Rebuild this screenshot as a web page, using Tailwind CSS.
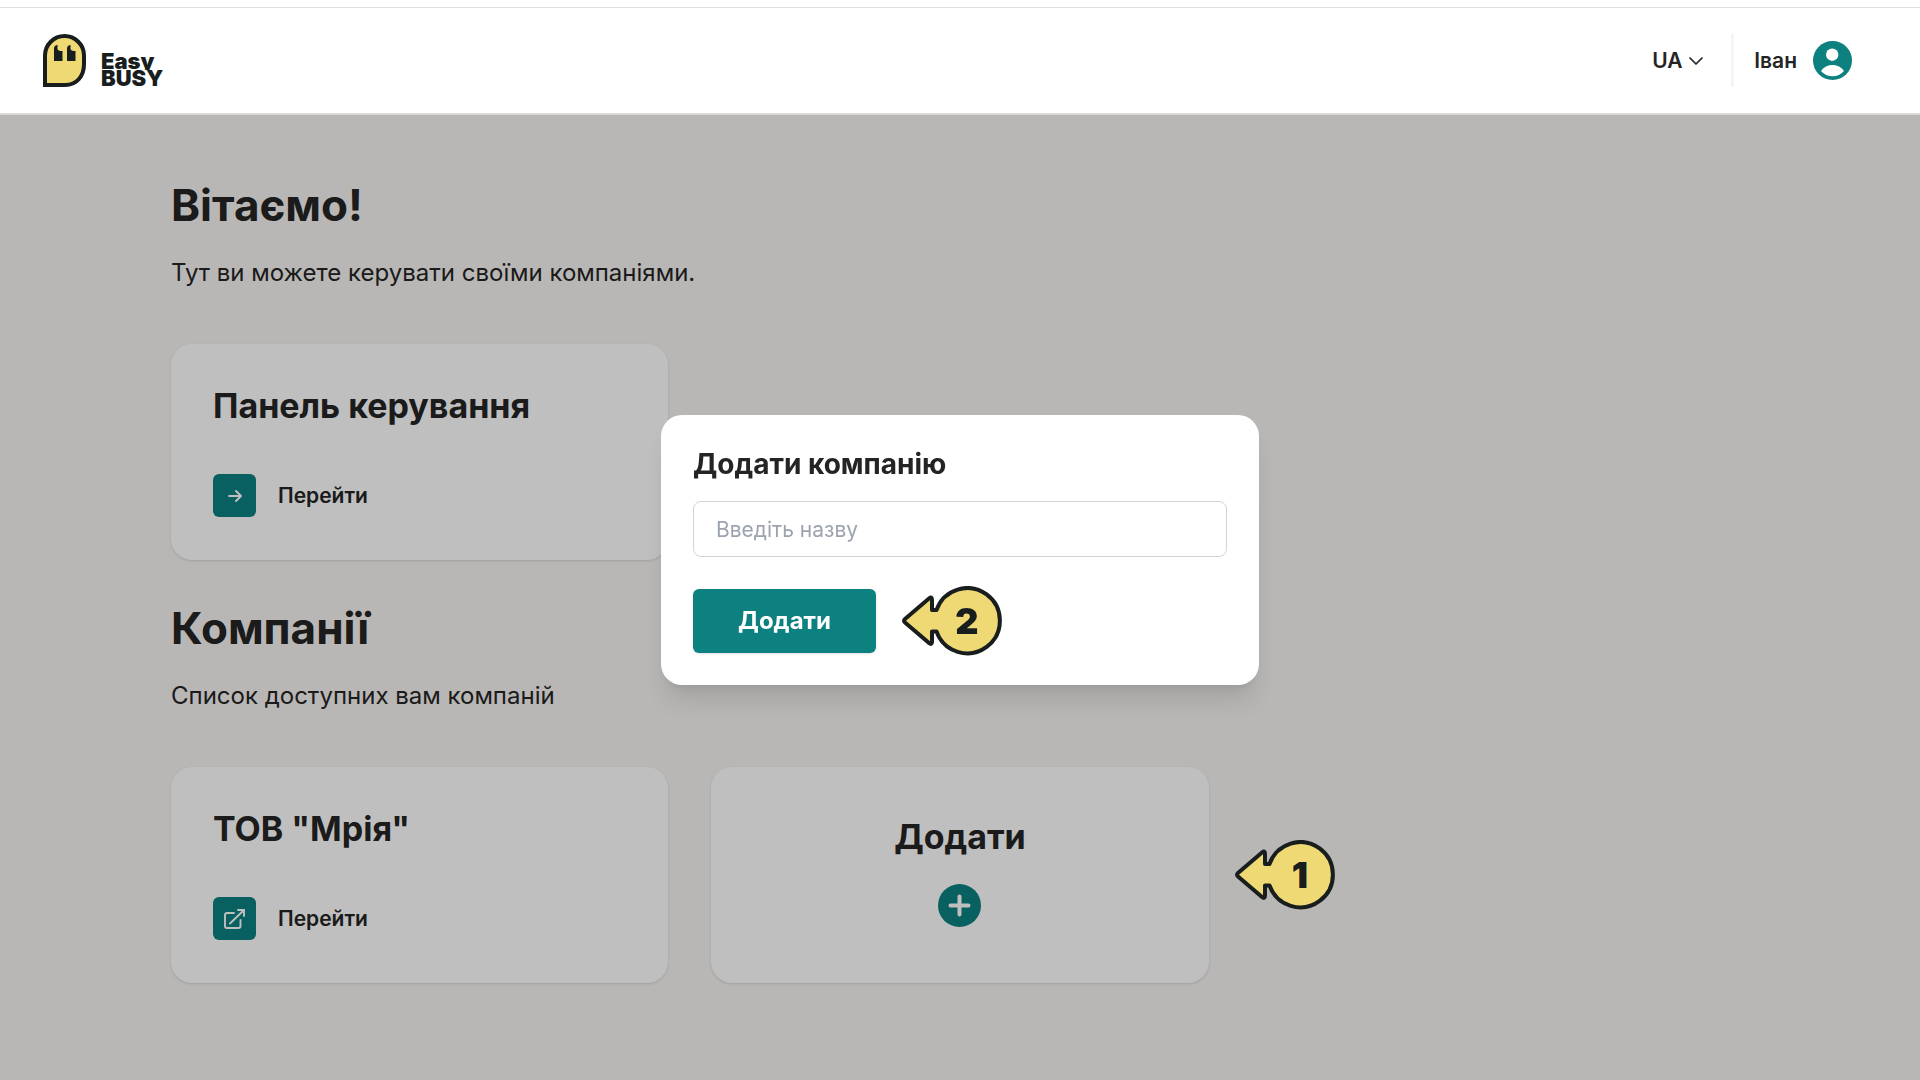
<!DOCTYPE html>
<html lang="uk">
<head>
    <meta charset="UTF-8">
    <meta name="viewport" content="width=device-width, initial-scale=1.0">
    <title>Компанії | Easy Busy</title>
    <script src="https://cdn.jsdelivr.net/npm/@tailwindcss/browser@4"></script>
</head>
<body class="min-h-screen flex flex-col bg-white font-['Inter',sans-serif] text-[#242424]">
    <header class="mt-[7px] border-t border-t-[#e0e0e0] border-b-2 border-b-[#d9d9d9] bg-white">
        <div class="h-[105px] pl-[43px] pr-[68px] flex justify-between items-center">
            <a href="#" class="flex items-end gap-[15px] text-[#181d1d]" aria-label="Easy Busy">
                <svg class="w-[43px] h-[53px]" viewBox="0 0 43 53" fill="none">
                    <path d="M2 51V21.5a19.5 19.5 0 0 1 39 0V30C41 42 34 51 22 51Z" fill="#efd974" stroke="#181d1d" stroke-width="4"/>
                    <path d="M11 27V14.5C11 12.5 12.5 11 14.5 11V15C15 16.5 16 17 19.5 17V27Z" fill="#181d1d"/>
                    <path d="M24 27V14.5C24 12.5 25.5 11 27.5 11V15C28 16.5 29 17 32.5 17V27Z" fill="#181d1d"/>
                </svg>
                <span class="flex flex-col text-[22px] leading-[17px] font-black"><span class="overflow-hidden">Easy</span><span>BUSY</span></span>
            </a>

            <div class="flex items-center text-[21px] leading-7 font-semibold">
                <div class="flex items-center gap-[6px]">
                    <select aria-label="Мова" class="appearance-none bg-transparent">
                        <option>UA</option>
                    </select>
                    <svg class="w-[14px] h-2 pointer-events-none" viewBox="0 0 14 8" fill="none" stroke="#242424" stroke-width="1.7" stroke-linecap="round" stroke-linejoin="round"><path d="M1 1l6 6 6-6"/></svg>
                </div>
                <div class="ml-7 mr-5 w-[3px] h-[53px] bg-[#f7f4f2]"></div>
                <button type="button" class="flex items-center gap-4">
                    <span>Іван</span>
                    <svg class="size-[39px]" viewBox="0 0 39 39">
                        <circle cx="19.5" cy="19.5" r="19.5" fill="#0d8080"/>
                        <circle cx="19.2" cy="13.7" r="6.2" fill="#fff"/>
                        <path d="M8 30C11 25.8 15 24 19.5 24S28 25.8 31 30C28 33.5 24 35.2 19.5 35.2S11 33.5 8 30Z" fill="#fff"/>
                    </svg>
                </button>
            </div>
        </div>
    </header>

    <main class="relative flex-1 bg-[#f7f4f2] px-[171px] pt-[66px] pb-24">
        <!-- overlay -->
        <div class="absolute inset-0 z-10 bg-black/25"></div>

        <section>
            <h1 class="text-[44px] leading-12 font-bold">Вітаємо!</h1>
            <p class="mt-[27px] text-[24px] leading-[34px]">Тут ви можете керувати своїми компаніями.</p>
            <div class="mt-[54px] grid grid-cols-3 gap-[43px]">
                <div class="rounded-[21px] bg-white px-[42px] py-[43px] shadow-sm">
                    <h2 class="text-[34px] leading-[38px] font-bold">Панель керування</h2>
                    <a href="#" class="mt-[49px] flex items-center gap-[22px] text-[21px] leading-7 font-semibold">
                        <span class="size-[43px] rounded-md bg-[#0d8080] flex items-center justify-center">
                            <svg class="w-[14px] h-3" viewBox="0 0 14 12" fill="none" stroke="#fff" stroke-width="1.9" stroke-linecap="round" stroke-linejoin="round"><path d="M1 6h12M8 1l5 5-5 5"/></svg>
                        </span>
                        Перейти
                    </a>
                </div>
            </div>
        </section>

        <section class="mt-11">
            <h1 class="text-[44px] leading-12 font-bold">Компанії</h1>
            <p class="mt-[27px] text-[24px] leading-[34px]">Список доступних вам компаній</p>
            <div class="mt-[54px] grid grid-cols-3 gap-[43px]">
                <div class="rounded-[21px] bg-white px-[42px] py-[43px] shadow-sm">
                    <h2 class="text-[34px] leading-[38px] font-bold">ТОВ "Мрія"</h2>
                    <a href="#" class="mt-[49px] flex items-center gap-[22px] text-[21px] leading-7 font-semibold">
                        <span class="size-[43px] rounded-md bg-[#0d8080] flex items-center justify-center">
                            <svg class="w-[21px] h-5" viewBox="0 0 21 20" fill="none" stroke="#fff" stroke-width="1.9" stroke-linecap="round"><path d="M10 4H3Q1 4 1 6V17Q1 19 3 19H14.500Q16.500 19 16.500 17V11M6 14.500L19.500 1.500M14 1H20V7"/></svg>
                        </span>
                        Перейти
                    </a>
                </div>
                <div class="relative">
                    <button type="button" class="w-full h-full pb-1.5 rounded-[21px] bg-white shadow-sm flex flex-col items-center justify-center gap-7">
                        <span class="text-[34px] leading-[38px] font-bold">Додати</span>
                        <svg class="size-[43px]" viewBox="0 0 43 43" fill="none"><circle cx="21.5" cy="21.5" r="21.5" fill="#0d8080"/><path d="M21.500 12.500v18M12.500 21.500h18" stroke="#fff" stroke-width="4" stroke-linecap="round"/></svg>
                    </button>
                    <svg class="absolute z-20 left-full top-1/2 -translate-y-1/2 ml-[26px] w-[100px] h-[70px]" viewBox="0 0 100 70">
                        <path d="M34.500 24H30V14Q30 10 27 12.500L3 33Q1 34.700 3 36.400L27 57Q30 59.500 30 55.400V45.400H34.500A32.600 32.600 0 1 0 34.500 24Z" fill="#efd974" stroke="#181d1d" stroke-width="4" stroke-linejoin="round"/>
                        <text x="65" y="48" text-anchor="middle" class="text-[36px] font-black fill-[#181d1d]">1</text>
                    </svg>
                </div>
            </div>
        </section>
    </main>

    <div class="fixed inset-0 z-30 pt-5 flex items-center justify-center">
        <form role="dialog" aria-labelledby="modal-title" class="w-full max-w-[598px] rounded-[21px] bg-white px-8 pt-[33px] pb-8 shadow-xl">
            <h2 id="modal-title" class="text-[28px] leading-8 font-bold">Додати компанію</h2>
            <input type="text" aria-labelledby="modal-title" placeholder="Введіть назву" class="mt-[21px] w-full h-14 px-[22px] rounded-lg border border-[#d4d4d4] text-[21px] placeholder:text-[#9ca3af]">
            <div class="mt-8 flex items-center gap-[26px]">
                <button type="submit" class="w-[183px] h-16 rounded-md bg-[#0d8080] text-white text-[24px] font-bold shadow-sm">Додати</button>
                <svg class="w-[100px] h-[70px] -my-1" viewBox="0 0 100 70">
                    <path d="M34.500 24H30V14Q30 10 27 12.500L3 33Q1 34.700 3 36.400L27 57Q30 59.500 30 55.400V45.400H34.500A32.600 32.600 0 1 0 34.500 24Z" fill="#efd974" stroke="#181d1d" stroke-width="4" stroke-linejoin="round"/>
                    <text x="65" y="48" text-anchor="middle" class="text-[36px] font-black fill-[#181d1d]">2</text>
                </svg>
            </div>
        </form>
    </div>
</body>
</html>
